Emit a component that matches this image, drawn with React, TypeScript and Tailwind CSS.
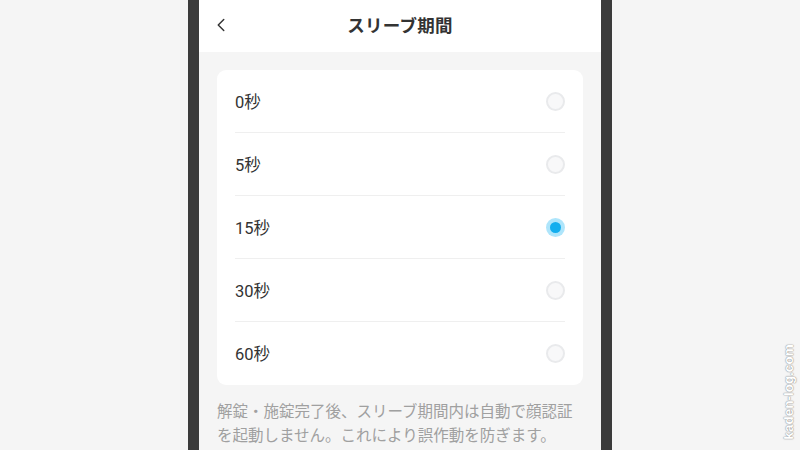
import { ChevronLeft } from 'lucide-react'

const OPTIONS = ['0秒', '5秒', '15秒', '30秒', '60秒']
const SELECTED = '15秒'

function Radio({ checked }: { checked: boolean }) {
  if (checked) {
    return (
      <span className="w-[19px] h-[19px] rounded-full bg-[#aee5fb] flex items-center justify-center">
        <span className="w-[11px] h-[11px] rounded-full bg-[#14aeee]" />
      </span>
    )
  }
  return <span className="w-[19px] h-[19px] rounded-full border-2 border-[#e9eaec] bg-[#f8f8f9]" />
}

export default function App() {
  return (
    <div
      className="relative w-[800px] h-[450px] bg-[#f5f5f5] flex justify-center overflow-hidden"
      style={{ fontFamily: 'Roboto, "Noto Sans CJK JP", sans-serif' }}
    >
      {/* phone */}
      <div className="w-[424px] h-[450px] border-x-[11px] border-[#3b3b3b] bg-[#f5f5f5] flex flex-col">
        {/* header */}
        <div className="h-[52px] bg-white flex items-center relative shrink-0">
          <ChevronLeft size={22} strokeWidth={1.6} className="absolute left-[11px] top-[14px] text-[#333]" />
          <p className="w-full text-center text-[17.5px] font-bold text-[#333] leading-none tracking-[0.3px] pt-[2px]">
            スリーブ期間
          </p>
        </div>

        {/* options */}
        <div className="mx-[18px] mt-[18px] bg-white rounded-[9px] px-[18px]">
          {OPTIONS.map((label, i) => (
            <div
              key={label}
              className={`h-[63px] flex items-center justify-between ${
                i < OPTIONS.length - 1 ? 'border-b border-[#efefef]' : ''
              }`}
            >
              <span className="text-[16.5px] text-[#333] pt-[4px]">{label}</span>
              <Radio checked={label === SELECTED} />
            </div>
          ))}
        </div>

        {/* note */}
        <p className="mx-[18px] mt-[15px] text-[15.5px] leading-[24px] text-[#a0a0a0] whitespace-nowrap">
          解錠・施錠完了後、スリーブ期間内は自動で顔認証
          <br />
          を起動しません。これにより誤作動を防ぎます。
        </p>
      </div>

      {/* watermark */}
      <span
        className="absolute left-[789px] top-[392px] -translate-x-1/2 -translate-y-1/2 -rotate-90 whitespace-nowrap text-[13.5px] font-bold text-white"
        style={{
          fontFamily: '"Liberation Sans", sans-serif',
          textShadow: '0 0 1px #9a9a9a, 0 0 1px #9a9a9a, 0 0 2px #bdbdbd',
        }}
      >
        kaden-log.com
      </span>
    </div>
  )
}
